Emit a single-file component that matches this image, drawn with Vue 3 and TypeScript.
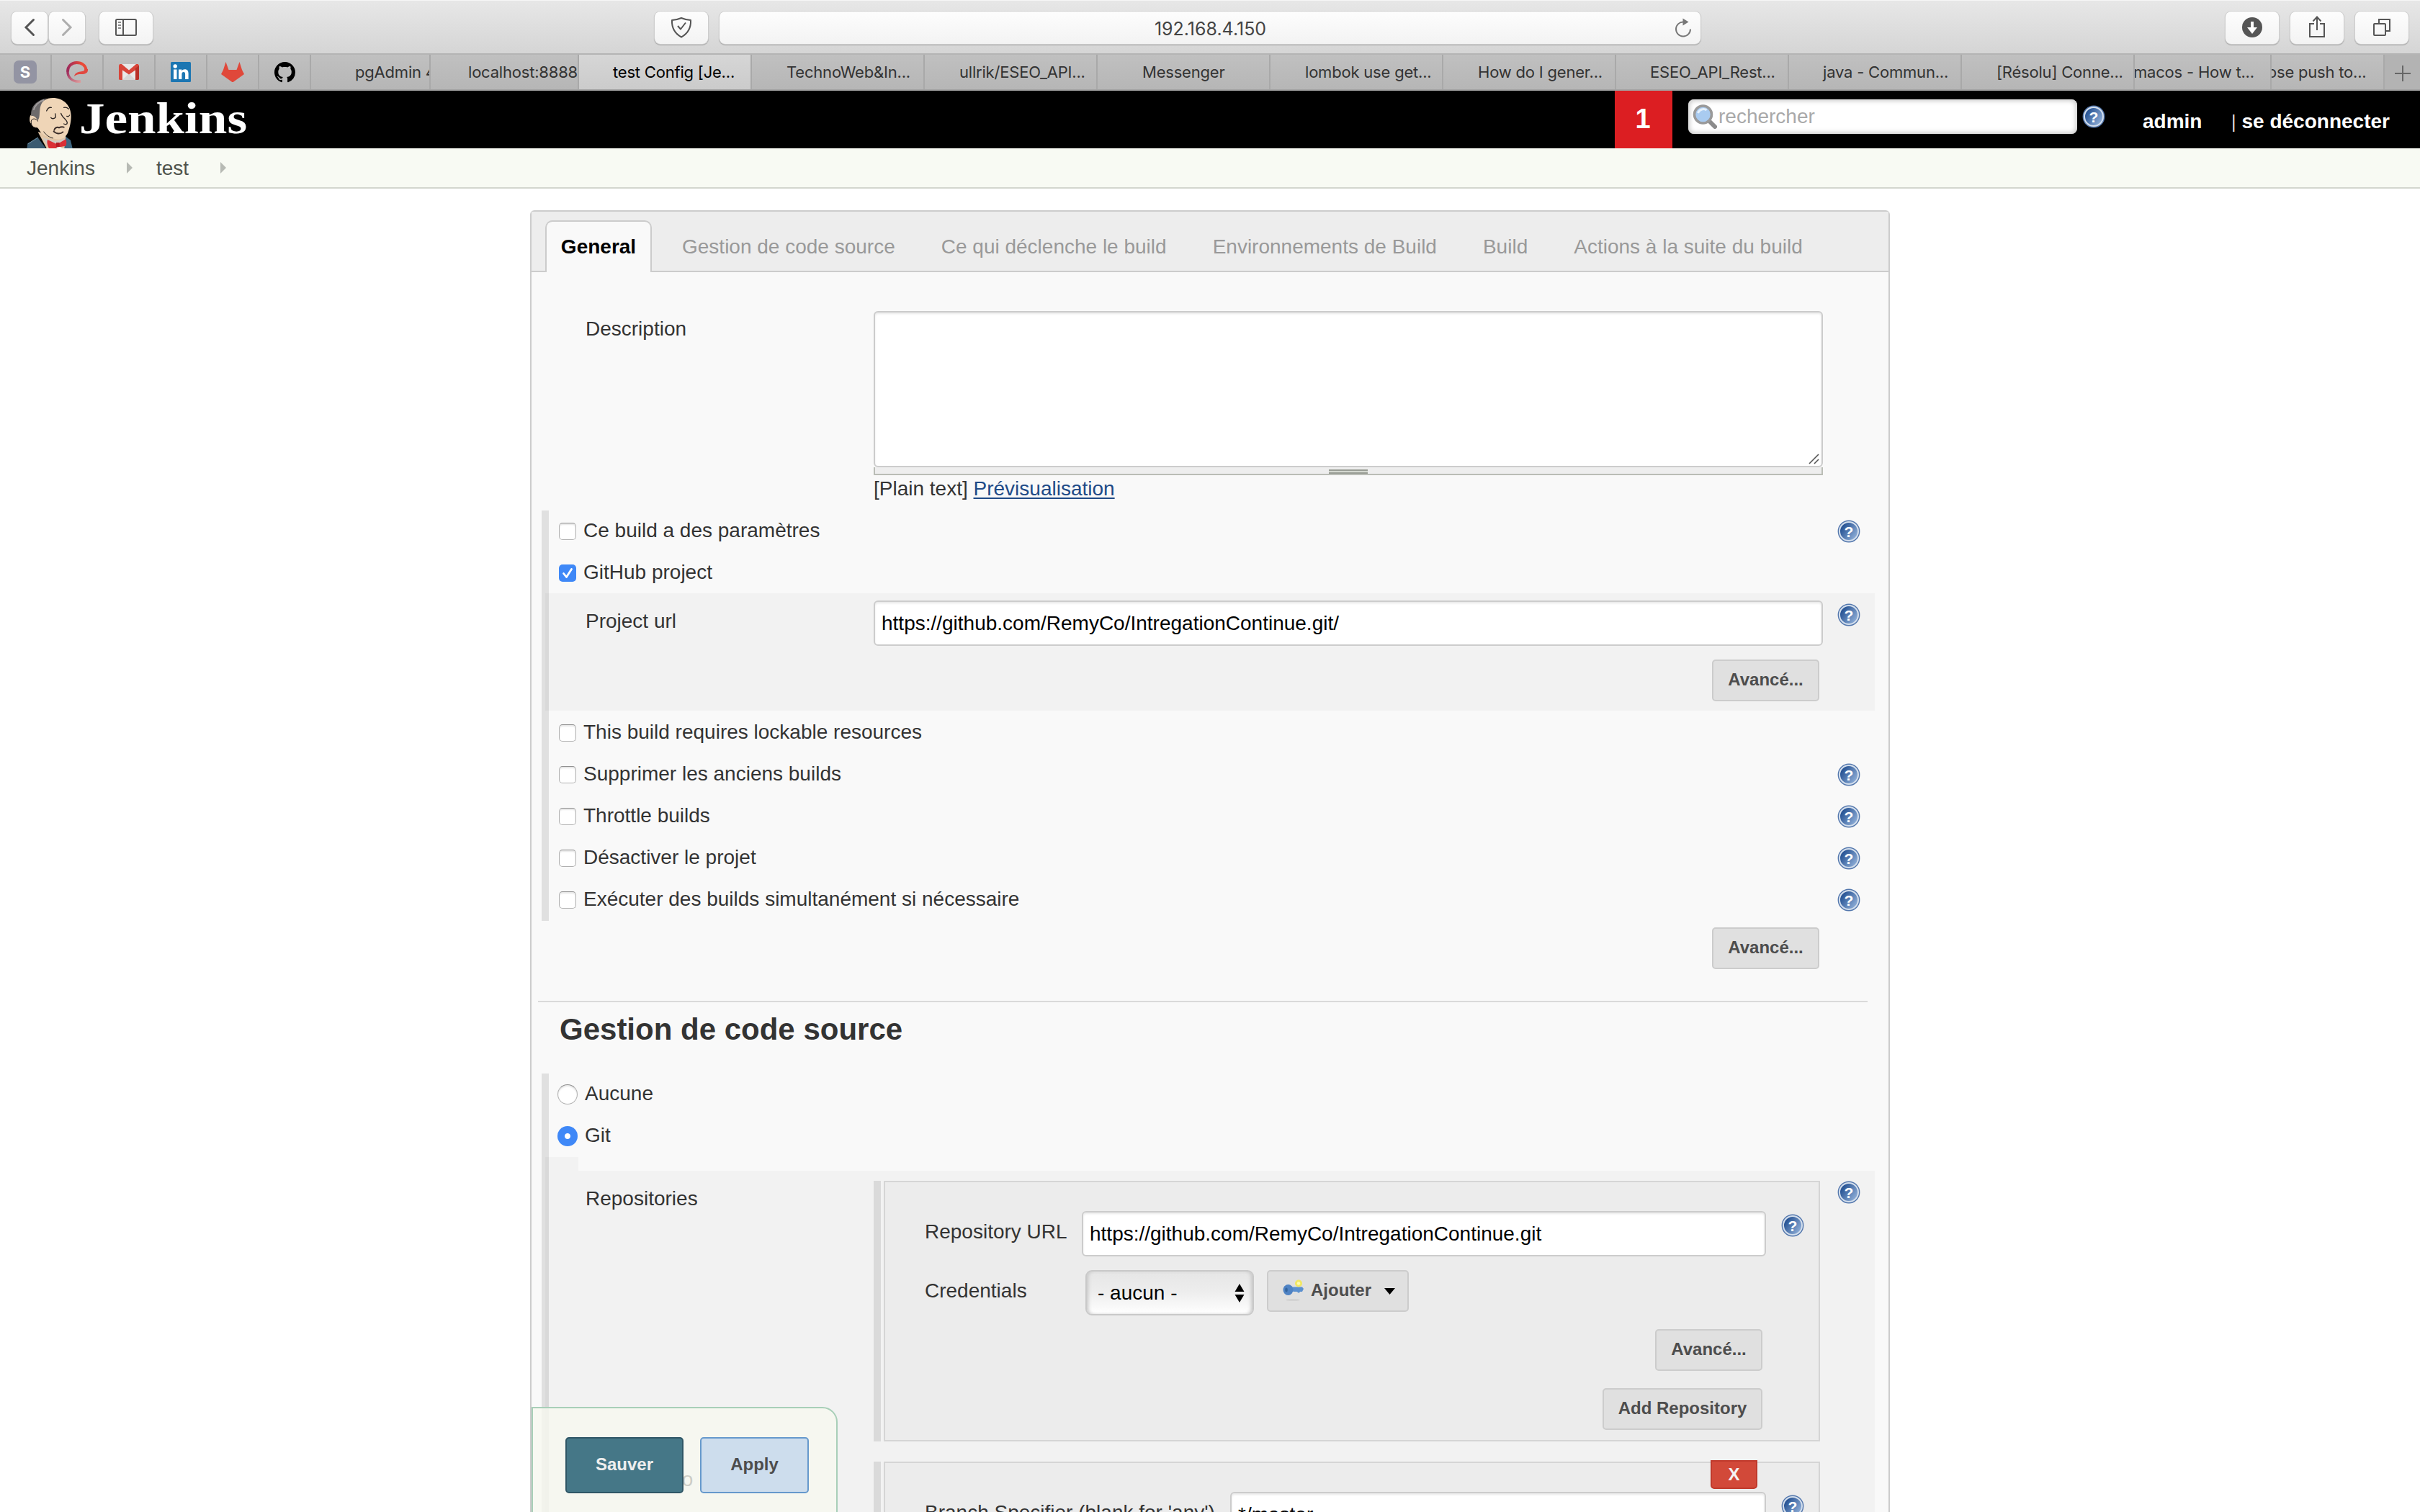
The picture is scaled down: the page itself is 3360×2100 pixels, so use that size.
<script setup lang="ts">
interface BrowserTab {
  title: string
  width: number
  indent: number
  active?: boolean
}

const browserTabs: BrowserTab[] = [
  { title: 'pgAdmin 4', width: 166, indent: 61 },
  { title: 'localhost:8888', width: 206, indent: 52 },
  { title: 'test Config [Je...', width: 240, indent: 47, active: true },
  { title: 'TechnoWeb&In...', width: 240, indent: 48 },
  { title: 'ullrik/ESEO_API...', width: 240, indent: 48 },
  { title: 'Messenger', width: 240, indent: 62 },
  { title: 'lombok use get...', width: 240, indent: 48 },
  { title: 'How do I gener...', width: 240, indent: 48 },
  { title: 'ESEO_API_Rest...', width: 240, indent: 47 },
  { title: 'java - Commun...', width: 240, indent: 47 },
  { title: '[Résolu] Conne...', width: 240, indent: 48 },
  { title: 'macos - How t...', width: 190, indent: -2 },
  { title: 'ose push to...', width: 157, indent: -6 },
]

const sections: string[] = [
  'Gestion de code source',
  'Ce qui déclenche le build',
  'Environnements de Build',
  'Build',
  'Actions à la suite du build',
]

interface Option {
  label: string
  help: boolean
}

const options: Option[] = [
  { label: 'This build requires lockable resources', help: false },
  { label: 'Supprimer les anciens builds', help: true },
  { label: 'Throttle builds', help: true },
  { label: 'Désactiver le projet', help: true },
  { label: 'Exécuter des builds simultanément si nécessaire', help: true },
]
</script>

<template>
  <div class="screen">
    <svg class="defs" width="0" height="0" aria-hidden="true">
      <defs>
        <linearGradient id="helpFill" x1="0" y1="0.2" x2="1" y2="0.9">
          <stop offset="0.15" stop-color="#2b5797" />
          <stop offset="1" stop-color="#9dbae0" />
        </linearGradient>
        <symbol id="help" viewBox="0 0 32 32">
          <circle cx="16" cy="16" r="15.4" fill="#5377ad" />
          <circle cx="16" cy="16" r="13" fill="url(#helpFill)" stroke="#d3deec" stroke-width="2" />
          <text x="16" y="23.5" text-anchor="middle" font-family="Liberation Sans, sans-serif" font-weight="700" font-size="21" fill="#fff">?</text>
        </symbol>
      </defs>
    </svg>

    <!-- Browser toolbar -->
    <div class="toolbar">
      <div class="tool nav">
        <svg width="50" height="46" viewBox="16 15 50 46"><path d="M46.5 27.500 36 38l10.500 10.500" fill="none" stroke="#555" stroke-width="3" stroke-linecap="round" /></svg>
      </div>
      <div class="tool nav next">
        <svg width="50" height="46" viewBox="68 15 50 46"><path d="M87.500 27.500 98 38 87.500 48.500" fill="none" stroke="#adadad" stroke-width="3" stroke-linecap="round" /></svg>
      </div>
      <div class="tool side">
        <svg width="74" height="46" viewBox="138 15 74 46" fill="none" stroke="#555" stroke-width="2">
          <rect x="161" y="27" width="28" height="22" rx="1.500" />
          <path d="M171 27v22" />
          <path d="M164 31h4M164 35h4M164 39h4" stroke="#8a8a8a" />
        </svg>
      </div>
      <div class="tool shield">
        <svg width="74" height="46" viewBox="909 15 74 46" fill="none" stroke="#555" stroke-width="2" stroke-linejoin="round">
          <path d="M933 28c5-.3 9-1.300 13-3 4 1.700 8 2.700 13 3 .5 10-3 18-13 23.500C936 46 932.500 38 933 28z" />
          <path d="M941 36l4 4.500 7-9" />
        </svg>
      </div>
      <div class="tool address">
        <span class="address-text">192.168.4.150</span>
        <svg class="reload" width="26" height="30" viewBox="0 0 26 30" fill="none" stroke="#777" stroke-width="2">
          <path d="M13.500 7.500a10 10 0 1 0 9.500 10" />
          <path d="M12.500 2.500l8 5-8 5z" fill="#777" stroke="none" />
        </svg>
      </div>
      <div class="tool act download">
        <svg width="74" height="46" viewBox="3090 15 74 46">
          <circle cx="3127" cy="38" r="14" fill="#555" />
          <path d="M3125 30h4v8h5l-7 9-7-9h5z" fill="#fff" />
        </svg>
      </div>
      <div class="tool act">
        <svg width="74" height="46" viewBox="3180 15 74 46" fill="none" stroke="#555" stroke-width="2">
          <path d="M3213 33h-6v18h20V33h-6M3217 42V24M3211.500 29.500l5.500-6 5.500 6" />
        </svg>
      </div>
      <div class="tool act">
        <svg width="74" height="46" viewBox="3270 15 74 46" fill="none" stroke="#555" stroke-width="2">
          <rect x="3296" y="33" width="16" height="16" rx="1" />
          <path d="M3303 33v-6h15v16h-6" />
        </svg>
      </div>
    </div>

    <!-- Browser tabs -->
    <div class="tabstrip">
      <div class="pin">
        <svg width="32" height="32" viewBox="0 0 32 32">
          <rect width="32" height="32" rx="7" fill="#9394a3" />
          <text x="16" y="24" text-anchor="middle" font-family="Inter, sans-serif" font-weight="700" font-size="22" fill="#fff">S</text>
        </svg>
      </div>
      <div class="pin">
        <svg width="32" height="32" viewBox="0 0 32 32">
          <defs>
            <linearGradient id="eFill" x1="0" y1="0" x2="1" y2="0">
              <stop offset="0" stop-color="#9e2a5b" />
              <stop offset="0.75" stop-color="#ea4a38" />
            </linearGradient>
            <linearGradient id="eTail" x1="0" y1="0" x2="1" y2="1">
              <stop offset="0" stop-color="#9e2a5b" />
              <stop offset="1" stop-color="#dd9a9a" />
            </linearGradient>
          </defs>
          <path d="M3 14.500c-.5 8.500 6 16 18 14.500" fill="none" stroke="url(#eTail)" stroke-width="3.400" />
          <path d="M3 15.500C3 8 8.500 3 15.500 3S28 7 28.500 13" fill="none" stroke="url(#eFill)" stroke-width="4" />
          <path d="M31 12c.5 5.500-3.500 7-9 7-4 0-7 .5-10 3 1-4 4-6 8.500-6.500 4-.5 6-1 6-4z" fill="#e14840" />
        </svg>
      </div>
      <div class="pin">
        <svg width="28" height="22" viewBox="0 0 28 22">
          <rect width="28" height="22" rx="1.500" fill="#e9e9e9" />
          <path d="M5 22l9-9 9 9z" fill="#d6d6d6" />
          <path d="M1 0h3l10 8.500L24 0h3l1 2v3L14 14.500 0 5V2z" fill="#d8453a" />
          <path d="M0 2l5 4v16H1.500Q0 22 0 20.500z" fill="#d8453a" />
          <path d="M28 2l-5 4v16h3.500q1.500 0 1.500-1.500z" fill="#b93129" />
        </svg>
      </div>
      <div class="pin">
        <svg width="28" height="28" viewBox="0 0 28 28">
          <rect width="28" height="28" rx="1.500" fill="#1c76b2" />
          <circle cx="6.200" cy="6" r="2.700" fill="#fff" />
          <path d="M4 10.500h4.500V24H4zM11 10.500h4.300v2c1-1.600 2.500-2.300 4.300-2.300 3.600 0 5 2.300 5 6V24h-4.500v-7c0-1.800-.5-3-2.200-3-1.900 0-2.500 1.300-2.500 3.200V24H11z" fill="#fff" />
        </svg>
      </div>
      <div class="pin">
        <svg width="32" height="28" viewBox="0 0 32 28">
          <path d="M6.500 0l4 11h11l4-11 3.500 11 3 6L16 28.500 0 17l3-6z" fill="#e0483a" />
        </svg>
      </div>
      <div class="pin">
        <svg width="29" height="29" viewBox="0 0 16 16">
          <path fill="#000" d="M8 0C3.580 0 0 3.580 0 8c0 3.540 2.290 6.530 5.470 7.590.4.070.55-.17.55-.38 0-.19-.01-.82-.01-1.490-2.010.37-2.530-.49-2.690-.94-.09-.23-.48-.94-.82-1.130-.28-.15-.68-.52-.01-.53.63-.01 1.080.58 1.230.82.72 1.210 1.870.87 2.330.66.07-.52.28-.87.51-1.070-1.780-.2-3.640-.89-3.640-3.950 0-.87.31-1.590.82-2.150-.08-.2-.36-1.020.08-2.120 0 0 .67-.21 2.200.82.64-.18 1.320-.27 2-.27s1.360.09 2 .27c1.530-1.040 2.200-.82 2.200-.82.44 1.100.16 1.920.08 2.120.51.56.82 1.270.82 2.150 0 3.070-1.870 3.750-3.650 3.950.29.25.54.73.54 1.480 0 1.070-.01 1.930-.01 2.200 0 .21.15.46.55.38A8.010 8.010 0 0 0 16 8c0-4.420-3.580-8-8-8z" />
        </svg>
      </div>
      <div
        v-for="tab in browserTabs"
        :key="tab.title"
        class="tab"
        :class="{ active: tab.active }"
        :style="{ width: tab.width + 'px' }"
      >
        <span class="tab-title" :style="{ marginLeft: tab.indent + 'px' }">{{ tab.title }}</span>
      </div>
      <div class="plus">
        <svg width="22" height="22" viewBox="0 0 22 22"><path d="M11 0v22M0 11h22" stroke="#666" stroke-width="2" /></svg>
      </div>
    </div>

    <!-- Jenkins header -->
    <header class="header">
      <svg class="butler" width="70" height="74" viewBox="45 36 210 222">
        <path d="M52 258l3-20 42-26 34 46z" fill="#3a5a70" />
        <path d="M200 258l12-50 22 16 8 34z" fill="#3f6680" />
        <path d="M56 240l42-27" stroke="#6f8ea0" stroke-width="3" fill="none" />
        <path d="M98 190l36 68h74l6-50z" fill="#e2c6a6" />
        <path d="M118 214l26 44h50l16-40-40 10z" fill="#cfc9c2" />
        <path d="M100 90c8-28 34-42 60-42 44 0 74 30 76 72 1 20-4 50-14 74-10 20-28 28-46 26-26-4-62-14-76-44-10-8-12-4-14-16-20 0-24-10-22-30 2-14 12-20 26-18z" fill="#efd5b7" />
        <path d="M70 124c-4-40 22-66 66-75-22 14-28 30-30 50-2 18 0 34-10 44-4-14-16-22-26-19z" fill="#6d6a6b" />
        <path d="M80 98c6-20 22-34 44-42" stroke="#a09c9c" stroke-width="6" fill="none" />
        <path d="M98 146c-6-14-26-14-28-2-2 18 8 30 26 28" fill="#efd5b7" stroke="#2a2422" stroke-width="3" />
        <path d="M134 102c4-10 10-16 20-14M206 88c8-2 14 0 20 6M152 130c4 6 14 6 20-2M218 124c4 3 8 2 12-4M170 114l2 14M194 112c4 18 26 26 26 40 0 6-8 8-14 4" stroke="#2a2422" stroke-width="4" fill="none" stroke-linecap="round" />
        <path d="M166 182c2-10 12-14 20-10 8-4 14-4 20-2M164 188c12 12 30 10 38 2" stroke="#3a2c28" stroke-width="6" fill="none" stroke-linecap="round" />
        <path d="M122 188c10 16 24 24 40 28" stroke="#2a2422" stroke-width="3" fill="none" />
        <path d="M138 222l38 18v18h-32c-6-10-10-24-6-36z" fill="#da2f35" />
        <path d="M180 240l34-20c4 10 4 18 0 28l-34 6z" fill="#da2f35" />
        <path d="M174 234h14v18h-14z" fill="#b51b24" />
        <path d="M178 258q8-12 20 0z" fill="#fff" />
      </svg>
      <span class="brand">Jenkins</span>
      <div class="alerts">1</div>
      <div class="search">
        <svg width="34" height="34" viewBox="0 0 34 34">
          <path d="M23 23l8 8" stroke="#8b8b8b" stroke-width="6" stroke-linecap="round" />
          <circle cx="14.500" cy="14" r="12" fill="#a9cbf0" stroke="#9a9a9a" stroke-width="3.500" />
          <path d="M7.500 12c2-5 8-7 12-4" stroke="#e4f0fc" stroke-width="3" fill="none" />
        </svg>
        <span>rechercher</span>
      </div>
      <svg class="header-help" width="32" height="32"><use href="#help" /></svg>
      <b class="user">admin</b>
      <span class="logout"><i>|</i><b>se déconnecter</b></span>
    </header>

    <nav class="crumbs">
      <span>Jenkins</span>
      <svg class="arrow first" width="8" height="16" viewBox="0 0 8 16"><path d="M0 0l8 8-8 8z" fill="#b7bab4" /></svg>
      <span>test</span>
      <svg class="arrow" width="8" height="16" viewBox="0 0 8 16"><path d="M0 0l8 8-8 8z" fill="#b7bab4" /></svg>
    </nav>

    <main class="panel">
      <div class="section-tabs">
        <div class="section-tab current">General</div>
        <div class="section-links">
          <span v-for="section in sections" :key="section">{{ section }}</span>
        </div>
      </div>

      <div class="field description">
        <div class="label">Description</div>
        <div class="area">
          <div class="textarea">
            <svg width="16" height="15" viewBox="0 0 16 15"><path d="M1 14L14 1M8 14l6-6" stroke="#555" stroke-width="1.600" /></svg>
          </div>
          <div class="grip"><i></i></div>
          <div class="format">[Plain text] <a>Prévisualisation</a></div>
        </div>
      </div>

      <div class="group">
        <div class="option">
          <i class="check"></i><span>Ce build a des paramètres</span>
          <svg class="row-help" width="32" height="32"><use href="#help" /></svg>
        </div>
        <div class="option">
          <i class="check on"><svg width="24" height="24" viewBox="0 0 24 24"><path d="M6.500 12.500l4 5 7-11" fill="none" stroke="#fff" stroke-width="2.800" stroke-linecap="round" stroke-linejoin="round" /></svg></i>
          <span>GitHub project</span>
        </div>
        <div class="nested project">
          <div class="field">
            <div class="label">Project url</div>
            <div class="input">https://github.com/RemyCo/IntregationContinue.git/</div>
            <svg class="field-help" width="32" height="32"><use href="#help" /></svg>
          </div>
          <div class="button advanced">Avancé...</div>
        </div>
        <div v-for="option in options" :key="option.label" class="option">
          <i class="check"></i><span>{{ option.label }}</span>
          <svg v-if="option.help" class="row-help" width="32" height="32"><use href="#help" /></svg>
        </div>
      </div>
      <div class="button more">Avancé...</div>

      <hr class="rule" />
      <h2 class="heading">Gestion de code source</h2>

      <div class="group scm">
        <div class="option"><i class="radio"></i><span>Aucune</span></div>
        <div class="option"><i class="radio on"></i><span>Git</span></div>
        <div class="step"></div>
        <div class="nested repos">
          <div class="field">
            <div class="label">Repositories</div>
            <div class="chunk">
              <i class="handle"></i>
              <div class="box">
                <div class="line">
                  <span class="name">Repository URL</span>
                  <div class="input">https://github.com/RemyCo/IntregationContinue.git</div>
                  <svg class="line-help" width="32" height="32"><use href="#help" /></svg>
                </div>
                <div class="line credentials">
                  <span class="name">Credentials</span>
                  <div class="select">
                    <span>- aucun -</span>
                    <svg width="14" height="26" viewBox="0 0 14 26"><path d="M7 0l6.500 11H.5zM7 26l6.500-11H.5z" fill="#000" /></svg>
                  </div>
                  <div class="button add">
                    <svg width="30" height="30" viewBox="0 0 30 30">
                      <ellipse cx="14" cy="28.500" rx="10" ry="1.300" fill="#cfcfcf" />
                      <path d="M12 10.500h15l2 2.500-2 4h-3l-1.500 2-3-2h-5z" fill="#5b90cf" />
                      <ellipse cx="7.500" cy="14.500" rx="7" ry="7.500" fill="#4f83c4" />
                      <ellipse cx="5" cy="14.500" rx="1.800" ry="3" fill="#34659f" />
                      <circle cx="22" cy="5.500" r="5" fill="#f4e94f" opacity="0.85" />
                      <circle cx="22" cy="5.500" r="2.200" fill="#fffbb0" />
                    </svg>
                    <span>Ajouter</span>
                    <svg width="15" height="9" viewBox="0 0 15 9"><path d="M0 0h15L7.500 9z" fill="#000" /></svg>
                  </div>
                </div>
                <div class="button end">Avancé...</div>
                <div class="button end repo">Add Repository</div>
              </div>
            </div>
            <svg class="field-help low" width="32" height="32"><use href="#help" /></svg>
          </div>

          <div class="field branches">
            <div class="label">Branches to build</div>
            <div class="chunk">
              <i class="handle"></i>
              <div class="box">
                <div class="delete">X</div>
                <div class="line">
                  <span class="name wide">Branch Specifier (blank for 'any')</span>
                  <div class="input">*/master</div>
                  <svg class="line-help" width="32" height="32"><use href="#help" /></svg>
                </div>
              </div>
            </div>
          </div>
        </div>
      </div>
    </main>

    <div class="savebar">
      <div class="save">Sauver</div>
      <div class="apply">Apply</div>
    </div>
  </div>
</template>

<style>
body {
  margin: 0;
  overflow: hidden;
  background: #fff;
}
</style>

<style scoped>
.screen {
  position: relative;
  display: flex;
  flex-direction: column;
  width: 3360px;
  height: 2100px;
  overflow: hidden;
  background: #fff;
  color: #333;
  font-family: "Liberation Sans", Arial, sans-serif;
  font-size: 28px;
  white-space: nowrap;
}
.screen * { box-sizing: border-box; }
.defs { position: absolute; }
svg { display: block; flex: none; }
i { font-style: normal; }

/* Browser toolbar */
.toolbar {
  display: flex;
  flex: none;
  height: 76px;
  padding: 15px 16px 0;
  border-top: 1px solid #f6f6f6;
  border-bottom: 2px solid #b4b4b4;
  background: linear-gradient(#e7e7e7, #d5d5d5);
}
.tool {
  display: flex;
  flex: none;
  height: 45px;
  border-radius: 8px;
  background: linear-gradient(#fdfdfd, #f3f3f3);
  box-shadow: 0 0 0 1px #cdcdcd, 0 1px 1px 1px #a9a9a9;
}
.tool svg { margin-top: -1px; }
.nav { width: 50px; }
.next { margin-left: 2px; }
.side { width: 74px; margin-left: 20px; }
.shield { width: 74px; margin-left: 697px; }
.address {
  align-items: center;
  width: 1362px;
  margin-left: 16px;
  padding: 0 11px 0 0;
}
.address-text {
  flex: 1;
  padding: 2px 0 0 38px;
  text-align: center;
  color: #444;
  font-family: Inter, sans-serif;
  font-size: 25px;
  letter-spacing: 0;
}
.act { width: 74px; margin-left: 16px; }
.download { margin-left: 729px; }

/* Browser tabs */
.tabstrip {
  display: flex;
  flex: none;
  height: 50px;
  border-bottom: 2px solid #a3a3a3;
  background: linear-gradient(#c0c0c0, #b6b6b6);
}
.pin {
  display: flex;
  flex: none;
  align-items: center;
  justify-content: center;
  width: 72px;
  border-right: 2px solid #a9a9a9;
}
.tab {
  display: flex;
  flex: none;
  align-items: center;
  overflow: hidden;
  border-right: 2px solid #a9a9a9;
  color: #333;
  font-family: Inter, sans-serif;
  font-size: 22px;
  letter-spacing: -0.2px;
}
.tab-title { flex: none; }
.tab.active {
  background: linear-gradient(#d6d6d6, #cbcbcb);
  color: #000;
}
.plus {
  display: flex;
  flex: 1;
  align-items: center;
  justify-content: center;
  padding-top: 3px;
  background: #b3b3b3;
}

/* Jenkins header */
.header {
  display: flex;
  flex: none;
  height: 80px;
  background: #000;
  color: #fff;
}
.butler { margin: 6px 0 0 35px; }
.brand {
  width: 232px;
  margin: -2px 0 0 5px;
  font-family: "Liberation Serif", serif;
  font-size: 61px;
  font-weight: 700;
  line-height: 82px;
  transform: scaleX(1.165);
  transform-origin: left;
}
.alerts {
  width: 80px;
  margin-left: 1900px;
  padding-right: 2px;
  background: #dc1e22;
  font-size: 38px;
  font-weight: 700;
  line-height: 78px;
  text-align: center;
}
.search {
  display: flex;
  width: 540px;
  height: 48px;
  margin: 12px 0 0 22px;
  padding: 7px 6px;
  border-radius: 8px;
  background: #fff;
  box-shadow: inset 0 0 6px 2px #c9c9c9;
  color: #a9a9a9;
  line-height: 34px;
}
.search span { margin-left: 2px; }
.header-help { margin: 20px 0 0 7px; }
.user {
  width: 123px;
  margin-left: 52px;
  line-height: 86px;
}
.logout {
  display: flex;
  gap: 8px;
  line-height: 86px;
}
.logout i { font-size: 25px; color: #ddd; }

.crumbs {
  display: flex;
  flex: none;
  align-items: center;
  height: 56px;
  padding: 0 0 0 37px;
  border-bottom: 2px solid #d3d6ce;
  background: #f8faf3;
  color: #4f534c;
}
.crumbs span { padding-top: 1px; }
.arrow { margin-left: 44px; }
.arrow + span { margin-left: 33px; }

/* Configuration panel */
.panel {
  flex: none;
  width: 1888px;
  height: 1900px;
  margin: 30px 0 0 736px;
  border: 2px solid #ccc;
  border-radius: 6px;
  background: #f9f9f9;
}
.section-tabs {
  display: flex;
  align-items: flex-end;
  height: 84px;
  padding-left: 19px;
  background: #ededed;
  box-shadow: inset 0 -2px #ccc;
  color: #999;
}
.current {
  width: 148px;
  height: 72px;
  border: 2px solid #ccc;
  border-bottom: 0;
  border-radius: 10px 10px 0 0;
  background: #f9f9f9;
  color: #000;
  font-weight: 700;
  line-height: 70px;
  text-align: center;
}
.section-links {
  display: flex;
  gap: 64px;
  margin-left: 42px;
  line-height: 72px;
}
.section-links span { margin-bottom: -1px; }
.field {
  display: flex;
}
.label {
  flex: none;
  width: 475px;
  padding-left: 75px;
  line-height: 49px;
}
.description {
  height: 331px;
  padding-top: 54px;
}
.area { width: 1318px; }
.textarea {
  display: flex;
  align-items: flex-end;
  justify-content: flex-end;
  height: 217px;
  padding: 2px;
  border: 2px solid #ccc;
  border-radius: 6px;
  background: #fff;
  box-shadow: inset 0 2px 3px #e8e8e8;
}
.grip {
  display: flex;
  justify-content: center;
  height: 11px;
  padding-top: 3px;
  border: 2px solid #babdb6;
  border-top: 0;
  background: #eee;
}
.grip i {
  width: 54px;
  height: 6px;
  border-top: 2px solid #999d95;
  border-bottom: 2px solid #999d95;
  background: #d3d7cf;
}
.format { line-height: 37px; }
.format a {
  color: #204a87;
  text-decoration: underline;
  text-decoration-thickness: 2px;
  text-underline-offset: 3px;
}
.group {
  margin-left: 14px;
  border-left: 10px solid #e0e0e0;
}
.option {
  display: flex;
  align-items: center;
  height: 58px;
  padding: 0 39px 0 14px;
}
.option span { padding-bottom: 3px; }
.row-help { margin-left: auto; }
.check {
  flex: none;
  width: 24px;
  height: 24px;
  margin-right: 10px;
  border: 1px solid #b0b0b0;
  border-top-color: #909090;
  border-radius: 5px;
  background: #fff;
  box-shadow: inset 0 2px 2px #e6e6e6;
}
.check.on {
  border: 0;
  background: #3f88f7;
  box-shadow: none;
}
.radio {
  flex: none;
  width: 28px;
  height: 28px;
  margin: 0 10px 0 -2px;
  border: 1px solid #b0b0b0;
  border-top-color: #909090;
  border-radius: 50%;
  background: #fff;
  box-shadow: inset 0 2px 2px #e6e6e6;
}
.radio.on {
  border: 0;
  background: radial-gradient(circle, #fff 3.500px, #3f88f7 4.500px);
  box-shadow: none;
}
.nested {
  margin: 0 19px 0 -5px;
  background: rgba(0, 0, 0, 0.027);
}
.nested .label {
  width: 456px;
  padding-left: 56px;
}
.project {
  height: 163px;
  padding-top: 10px;
  margin-top: -1px;
  margin-bottom: 2px;
}
.project .label { line-height: 57px; }
.input {
  width: 1318px;
  height: 63px;
  padding-left: 9px;
  border: 2px solid #ccc;
  border-radius: 6px;
  background: #fff;
  box-shadow: inset 0 2px 3px #e8e8e8;
  color: #000;
  line-height: 60px;
}
.field-help { margin: 4px 0 0 20px; }
.field-help.low { margin: 0 0 0 24px; }
.button {
  display: flex;
  align-items: center;
  justify-content: center;
  width: 149px;
  height: 58px;
  padding-bottom: 3px;
  border: 2px solid #ccc;
  border-radius: 5px;
  background: #e0e0e0;
  color: #4d4d4d;
  font-size: 24px;
  font-weight: 700;
}
.advanced { margin: 19px 77px 0 auto; }
.more { margin: 9px 96px 0 auto; }
.rule {
  height: 2px;
  margin: 44px 29px 0 9px;
  border: 0;
  background: #dadada;
}
.heading {
  margin: 0 0 23px 39px;
  font-size: 42px;
  line-height: 76px;
}
.step {
  width: 46px;
  height: 19px;
  margin-left: -5px;
  background: rgba(0, 0, 0, 0.027);
}
.repos {
  height: 500px;
  padding-top: 14px;
}
.chunk {
  display: flex;
  gap: 4px;
  width: 1314px;
  height: 362px;
}
.handle {
  width: 10px;
  background: #dadada;
}
.box {
  position: relative;
  flex: 1;
  padding: 40px 0 0 55px;
  border: 2px solid #d5d5d5;
  background: #ececec;
}
.line {
  display: flex;
}
.name {
  width: 218px;
  line-height: 57px;
}
.name.wide { width: 424px; }
.box .input {
  flex: none;
  width: 950px;
}
.box .name.wide + .input { width: 744px; }
.line-help { margin: 4px 0 0 21px; }
.credentials { margin-top: 19px; }
.select {
  display: flex;
  align-items: center;
  justify-content: space-between;
  width: 234px;
  height: 63px;
  margin-left: 5px;
  padding: 0 11px 0 15px;
  border: 2px solid #c9c9c9;
  border-radius: 9px;
  background: linear-gradient(#e6e6e6, #ededed 48%, #fff);
  box-shadow: inset 4px 0 5px -2px #c6c6c6, inset -4px 0 5px -2px #c6c6c6;
  color: #000;
}
.add {
  justify-content: flex-start;
  width: 197px;
  margin-left: 18px;
  padding-left: 20px;
}
.add span { margin: 0 18px 0 9px; }
.add svg:last-child { margin-top: 4px; }
.end { margin: 19px 78px 0 auto; }
.end.repo {
  width: 222px;
  margin-top: 24px;
}
.branches { margin-top: 28px; }
.delete {
  position: absolute;
  top: -4px;
  right: 85px;
  width: 65px;
  height: 40px;
  border: 2px solid #c0392b;
  border-radius: 0 0 5px 5px;
  background: #d24939;
  color: #f4f4f4;
  font-size: 24px;
  font-weight: 700;
  line-height: 36px;
  text-align: center;
}

/* Sticky save bar */
.savebar {
  position: absolute;
  top: 1954px;
  left: 738px;
  display: flex;
  gap: 23px;
  width: 425px;
  height: 160px;
  padding: 40px 0 0 45px;
  border: 2px solid #a8cfb8;
  border-radius: 0 21px 0 0;
  background: rgba(247, 248, 240, 0.78);
}
.save,
.apply {
  height: 78px;
  border: 2px solid #2f5666;
  border-radius: 5px;
  font-size: 24px;
  font-weight: 700;
  line-height: 72px;
  text-align: center;
}
.save {
  width: 164px;
  background: #457787;
  color: #eee;
}
.apply {
  width: 151px;
  border-color: #6699cc;
  background: #cddded;
  color: #4d4d4d;
}
</style>
